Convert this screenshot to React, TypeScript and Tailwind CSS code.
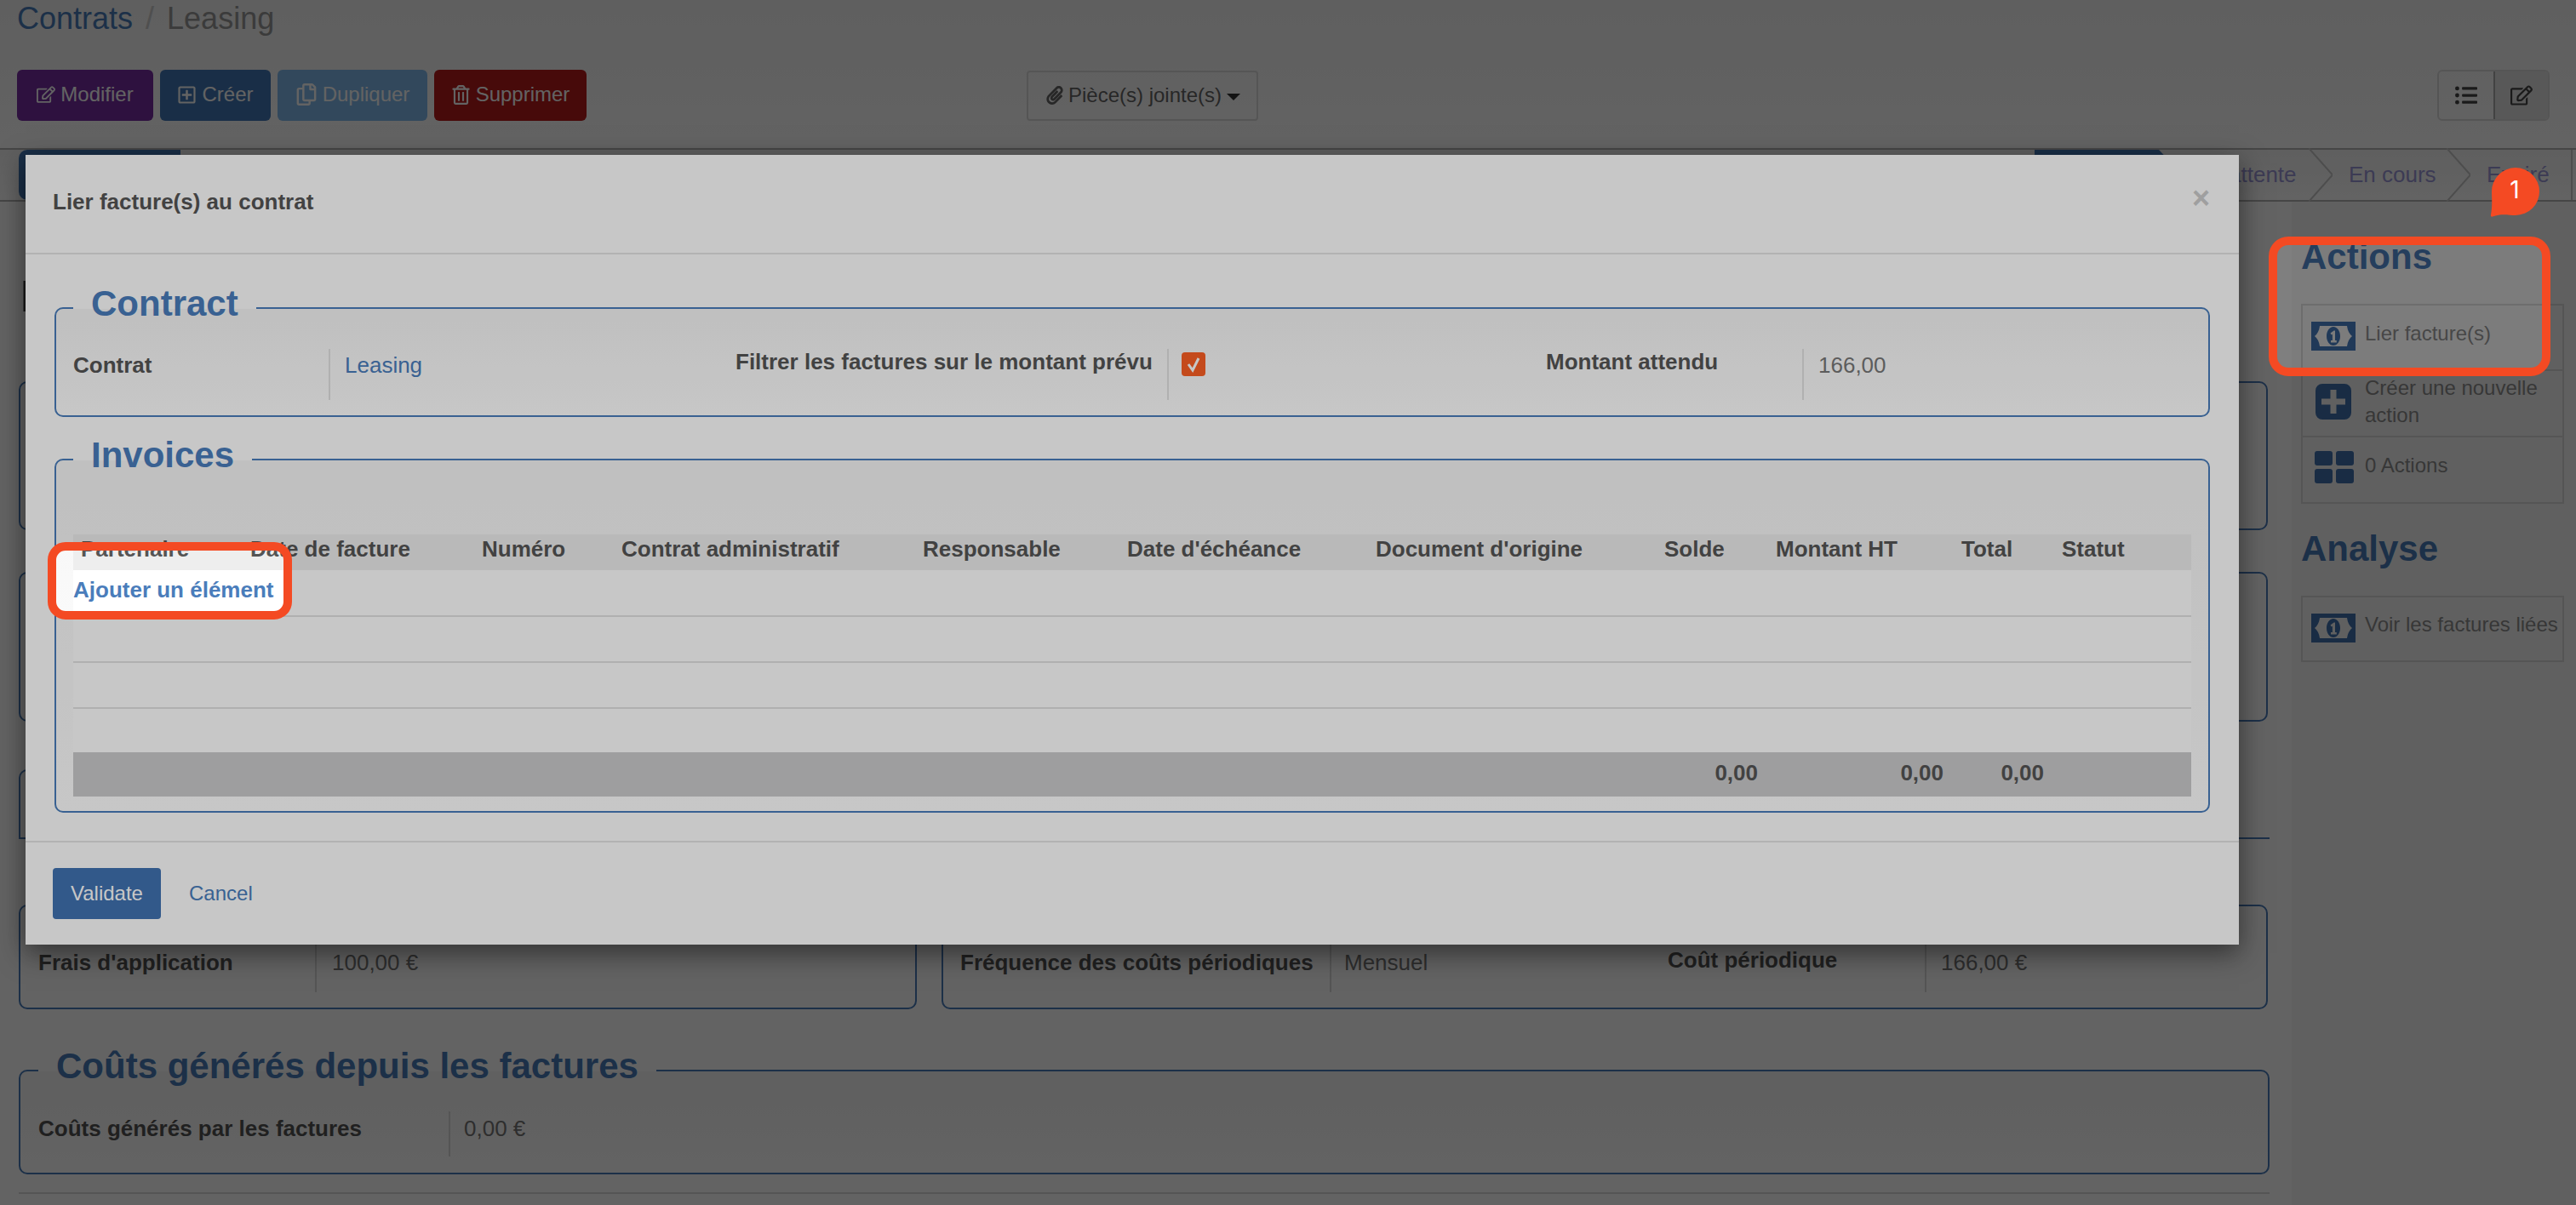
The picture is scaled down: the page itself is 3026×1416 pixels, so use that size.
import type { ReactNode } from "react";
import {
  FaListUl,
  FaPaperclip,
  FaRegCopy,
  FaRegEdit,
  FaRegPlusSquare,
  FaRegTrashAlt,
} from "react-icons/fa";

const COLUMNS = [
  { label: "Partenaire", width: "w-[199px]" },
  { label: "Date de facture", width: "w-[272px]" },
  { label: "Numéro", width: "w-[164px]" },
  { label: "Contrat administratif", width: "w-[354px]" },
  { label: "Responsable", width: "w-[240px]" },
  { label: "Date d'échéance", width: "w-[292px]" },
  { label: "Document d'origine", width: "w-[339px]" },
  { label: "Solde", width: "w-[131px]", total: "0,00" },
  { label: "Montant HT", width: "w-[218px]", total: "0,00" },
  { label: "Total", width: "w-[118px]", total: "0,00" },
  { label: "Statut", width: "w-[161px]" },
];

function roundedRect(x: number, y: number, w: number, h: number, r: number) {
  return `M${x + r} ${y}H${x + w - r}A${r} ${r} 0 0 1 ${x + w} ${y + r}V${y + h - r}A${r} ${r} 0 0 1 ${x + w - r} ${y + h}H${x + r}A${r} ${r} 0 0 1 ${x} ${y + h - r}V${y + r}A${r} ${r} 0 0 1 ${x + r} ${y}Z`;
}

function MoneyIcon() {
  return (
    <svg viewBox="0 0 52 34" className="h-[34px] w-[52px] fill-[#4072b1]">
      <path
        fillRule="evenodd"
        d="M0 0H52V34H0ZM10 5Q9 13 4 17Q9 21 10 29H42Q43 21 48 17Q43 13 42 5Z"
      />
      <path
        fillRule="evenodd"
        d="M26 6C30.6 6 34 11 34 17C34 23 30.6 28 26 28C21.4 28 18 23 18 17C18 11 21.4 6 26 6ZM26.6 10.5L22.5 13.5L23.8 15.5L24.9 14.7V22H23V24.4H29.8V22H28V10.5Z"
      />
    </svg>
  );
}

function PlusIcon() {
  return (
    <svg viewBox="0 0 42 42" className="h-[42px] w-[42px] fill-[#4072b1]">
      <path
        fillRule="evenodd"
        d="M8 0H34A8 8 0 0 1 42 8V34A8 8 0 0 1 34 42H8A8 8 0 0 1 0 34V8A8 8 0 0 1 8 0ZM17.5 7V17.5H7V24.5H17.5V35H24.5V24.5H35V17.5H24.5V7Z"
      />
    </svg>
  );
}

function GridIcon() {
  return (
    <svg viewBox="0 0 46 38" className="h-[38px] w-[46px] fill-[#4072b1]">
      <rect x="0" y="0" width="21" height="17" rx="3" />
      <rect x="25" y="0" width="21" height="17" rx="3" />
      <rect x="0" y="21" width="21" height="17" rx="3" />
      <rect x="25" y="21" width="21" height="17" rx="3" />
    </svg>
  );
}

function Sheet({
  title,
  children,
  className,
}: {
  title: string;
  children: ReactNode;
  className: string;
}) {
  return (
    <fieldset
      className={`rounded-[10px] border-2 border-[#4a7dbb] bg-linear-to-b from-[#f6f6f6] to-white ${className}`}
    >
      <legend className="px-[21px] pb-[10px] text-[42px] leading-[48px] font-bold text-[#4a7dbb]">
        {title}
      </legend>
      {children}
    </fieldset>
  );
}

function ToolButton({
  icon,
  label,
  className,
}: {
  icon: ReactNode;
  label: string;
  className: string;
}) {
  return (
    <button
      className={`flex h-[60px] items-center justify-center gap-[6px] rounded-[6px] pb-[2px] text-[24px] text-white ${className}`}
    >
      {icon}
      {label}
    </button>
  );
}

function StatusChevron() {
  return (
    <svg viewBox="0 0 28 63" className="h-[63px] w-[28px] shrink-0 fill-none stroke-[#c6c6c6] stroke-2">
      <path d="M0 0L28 31.5L0 63" />
    </svg>
  );
}

function ActionBox({ children }: { children: ReactNode }) {
  return <div className="mt-[31px] w-[309px] border-2 border-[#dbdbdb]">{children}</div>;
}

export default function App() {
  return (
    <div className="relative h-[1416px] w-[3026px] overflow-hidden bg-white font-['Liberation_Sans',Arial,sans-serif] text-[26px] text-[#555]">
      {/* page under the dialog */}
      <header className="h-[174px] bg-linear-to-b from-[#f4f4f4] to-white pl-[20px]">
        <div className="pt-[2px] text-[36px] leading-[40px]">
          <span className="text-[#4a7dbb]">Contrats</span>
          <span className="px-[15px] text-[#ccc]">/</span>
          <span className="text-[#999]">Leasing</span>
        </div>
        <div className="mt-[40px] flex items-center pr-[31px]">
          <div className="flex w-[1186px] gap-[8px]">
            <ToolButton icon={<FaRegEdit className="text-[22px]" />} label="Modifier" className="w-[160px] bg-[#762ea2]" />
            <ToolButton icon={<FaRegPlusSquare className="text-[23px]" />} label="Créer" className="w-[130px] bg-[#4378b6]" />
            <ToolButton icon={<FaRegCopy className="text-[26px]" />} label="Dupliquer" className="w-[176px] bg-[#83bbec]" />
            <ToolButton icon={<FaRegTrashAlt className="text-[23px]" />} label="Supprimer" className="w-[179px] bg-[#b61a1a]" />
          </div>
          <button className="flex h-[59px] w-[272px] items-center gap-[5px] rounded-[4px] border-2 border-[#dbdbdb] pl-[20px] text-[24px] text-[#666]">
            <FaPaperclip className="text-[22px]" />
            Pièce(s) jointe(s)
            <span className="mt-[3px] ml-[1px] border-x-[8px] border-t-[8px] border-x-transparent border-t-[#333]" />
          </button>
          <div className="ml-auto flex h-[60px] w-[132px] rounded-[6px] border-2 border-[#dbdbdb]">
            <span className="flex w-[64px] items-center justify-center text-[26px] text-[#444]">
              <FaListUl />
            </span>
            <span className="flex flex-1 items-center justify-center rounded-r-[4px] border-l-2 border-[#aaa] bg-[#e2e2e2] text-[26px] text-[#444]">
              <FaRegEdit />
            </span>
          </div>
        </div>
      </header>

      <div className="flex h-[63px] items-center border-y-2 border-[#b5b5b5] bg-linear-to-b from-[#f4f4f4] to-white text-[#9c98d8]">
        <div className="ml-[22px] h-[59px] w-[190px] rounded-l-[10px] bg-[#4378b6]" />
        <div className="ml-[2178px] h-[59px] w-[174px] bg-[#4378b6] [clip-path:polygon(0_0,146px_0,100%_50%,146px_100%,0_100%)]" />
        <span className="ml-[15px] w-[133px] shrink-0">En attente</span>
        <StatusChevron />
        <span className="ml-[19px] w-[115px] shrink-0">En cours</span>
        <StatusChevron />
        <span className="ml-[19px] h-full w-[101px] shrink-0 border-r-2 border-[#c6c6c6] leading-[59px]">Expiré</span>
      </div>

      <div className="flex h-[1179px]">
        <main className="w-[2692px] shrink-0 pr-[26px] pl-[22px]">
          <h1 className="mt-[85px] pl-[2px] text-[52px] leading-[52px] font-bold text-[#444]">Leasing</h1>
          <div className="mt-[74px] grid grid-cols-[1055px_1558px] gap-x-[29px] gap-y-[49px]">
            <div className="h-[175px] rounded-[10px] border-2 border-[#4a7dbb]" />
            <div className="h-[175px] rounded-[10px] border-2 border-[#4a7dbb]" />
            <div className="h-[176px] rounded-[10px] border-2 border-[#4a7dbb]" />
            <div className="h-[176px] rounded-[10px] border-2 border-[#4a7dbb]" />
          </div>
          <div className="mt-[56px] h-[82px] border-b-2 border-[#4a7dbb]">
            <div className="h-full w-[20px] rounded-tl-[10px] border-t-2 border-l-2 border-[#4a7dbb]" />
          </div>
          <div className="mt-[77px] grid grid-cols-[1055px_1558px] gap-x-[29px]">
            <div className="flex h-[123px] rounded-[10px] border-2 border-[#4a7dbb] pt-[41px] pl-[21px]">
              <div className="h-[60px] w-[325px] pt-[7px] leading-[36px] font-bold">Frais d'application</div>
              <div className="h-[60px] border-l-2 border-[#dbdbdb] pt-[7px] pl-[18px] leading-[36px] text-[#777]">100,00 €</div>
            </div>
            <div className="flex h-[123px] rounded-[10px] border-2 border-[#4a7dbb] pt-[41px] pl-[20px]">
              <div className="h-[60px] w-[434px] pt-[7px] leading-[36px] font-bold">Fréquence des coûts périodiques</div>
              <div className="h-[60px] w-[397px] border-l-2 border-[#dbdbdb] pt-[7px] pl-[15px] leading-[36px] text-[#777]">Mensuel</div>
              <div className="h-[60px] w-[302px] pt-[4px] leading-[36px] font-bold">Coût périodique</div>
              <div className="h-[60px] border-l-2 border-[#dbdbdb] pt-[7px] pl-[17px] leading-[36px] text-[#777]">166,00 €</div>
            </div>
          </div>
          <Sheet title="Coûts générés depuis les factures" className="mt-[43px] pb-[19px] pl-[21px]">
            <div className="mt-[19px] flex h-[53px]">
              <div className="w-[482px] pt-[2px] leading-[36px] font-bold">Coûts générés par les factures</div>
              <div className="border-l-2 border-[#dbdbdb] pt-[2px] pl-[16px] leading-[36px] text-[#777]">0,00 €</div>
            </div>
          </Sheet>
          <hr className="mt-[21px] border-t-2 border-[#dcdcdc]" />
        </main>

        <aside className="flex-1 bg-[#f9f9f9] pt-[41px] pl-[11px] text-[24px] leading-[32px] text-[#8f8f8f]">
          <h2 className="text-[42px] leading-[48px] font-bold text-[#4a7dbb]">Actions</h2>
          <div className="mt-[31px] w-[309px] border-2 border-[#dbdbdb]">
            <div className="flex h-[77px] border-b-2 border-[#dbdbdb] pt-[19px] pl-[10px]">
              <MoneyIcon />
              <span className="-mt-[2px] ml-[11px]">Lier facture(s)</span>
            </div>
            <div className="flex h-[78px] border-b-2 border-[#dbdbdb] pt-[4px] pl-[15px]">
              <span className="pt-[11px]"><PlusIcon /></span>
              <span className="ml-[16px]">Créer une nouvelle action</span>
            </div>
            <div className="flex h-[76px] pt-[16px] pl-[14px]">
              <GridIcon />
              <span className="mt-[1px] ml-[13px]">0 Actions</span>
            </div>
          </div>
          <h2 className="mt-[29px] text-[42px] leading-[48px] font-bold text-[#4a7dbb]">Analyse</h2>
          <ActionBox>
            <div className="flex h-[74px] pt-[19px] pl-[10px]">
              <MoneyIcon />
              <span className="-mt-[3px] ml-[11px] whitespace-nowrap">Voir les factures liées</span>
            </div>
          </ActionBox>
        </aside>
      </div>

      {/* dialog backdrop */}
      <div className="absolute inset-0 bg-black/50" />

      {/* dialog */}
      <div className="absolute top-[182px] left-[30px] w-[2600px] bg-white shadow-[0_10px_30px_rgba(0,0,0,0.5)]">
        <div className="relative h-[117px] border-b-2 border-[#e5e5e5] pt-[37px] pl-[32px] leading-[36px] font-bold">
          Lier facture(s) au contrat
          <span className="absolute top-[31px] right-[34px] text-[36px] leading-[40px] font-bold text-[#ccc]">×</span>
        </div>
        <div className="px-[34px] pt-[34px]">
          <Sheet title="Contract" className="pb-[18px] pl-[20px]">
            <div className="mt-[19px] flex h-[60px]">
              <div className="w-[300px] pt-[1px] leading-[36px] font-bold">Contrat</div>
              <div className="w-[478px] border-l-2 border-[#e2e2e2] pt-[1px] pl-[17px] leading-[36px] text-[#4a7dbb]">Leasing</div>
              <div className="w-[507px] leading-[30px] font-bold">Filtrer les factures sur le montant prévu</div>
              <div className="w-[445px] border-l-2 border-[#e2e2e2] pt-[4px] pl-[15px]">
                <span className="flex h-[28px] w-[28px] items-center justify-center rounded-[4px] bg-[#fb5f24]">
                  <svg viewBox="0 0 24 24" className="h-[24px] w-[24px] fill-none stroke-white stroke-[3]">
                    <path d="M6 12L11 19L18 5" />
                  </svg>
                </span>
              </div>
              <div className="w-[301px] leading-[30px] font-bold">Montant attendu</div>
              <div className="border-l-2 border-[#e2e2e2] pt-[1px] pl-[17px] leading-[36px] text-[#777]">166,00</div>
            </div>
          </Sheet>
          <Sheet title="Invoices" className="mt-[21px] pr-[19px] pb-[17px] pl-[20px]">
            <table className="mt-[59px] w-[2488px] table-fixed leading-[30px]">
              <thead>
                <tr className="h-[42px] bg-[#eeeeee]">
                  {COLUMNS.map((col) => (
                    <th key={col.label} className={`pb-[8px] pl-[9px] text-left font-bold whitespace-nowrap ${col.width}`}>
                      {col.label}
                    </th>
                  ))}
                </tr>
              </thead>
              <tbody className="bg-white">
                <tr className="h-[54px] border-b-2 border-[#e2e2e2]">
                  <td colSpan={11} className="pb-[8px] font-bold text-[#4a7dbb]">
                    Ajouter un élément
                  </td>
                </tr>
                <tr className="h-[54px] border-b-2 border-[#e2e2e2]"><td colSpan={11} /></tr>
                <tr className="h-[54px] border-b-2 border-[#e2e2e2]"><td colSpan={11} /></tr>
                <tr className="h-[52px]"><td colSpan={11} /></tr>
              </tbody>
              <tfoot>
                <tr className="h-[52px] bg-[#cbcbcc]">
                  {COLUMNS.map((col) => (
                    <td key={col.label} className="pr-[12px] pb-[4px] text-right font-bold">
                      {col.total}
                    </td>
                  ))}
                </tr>
              </tfoot>
            </table>
          </Sheet>
        </div>
        <div className="mt-[33px] flex h-[122px] items-start gap-[33px] border-t-2 border-[#e5e5e5] pt-[30px] pl-[32px] text-[24px]">
          <button className="h-[60px] w-[127px] rounded-[4px] bg-[#4072b1] text-white">Validate</button>
          <span className="pt-[12px] text-[#4a7dbb]">Cancel</span>
        </div>
      </div>

      {/* guide overlay with its two spotlights */}
      <svg viewBox="0 0 3026 1416" className="absolute inset-0 h-[1416px] w-[3026px]">
        <path
          fillRule="evenodd"
          fillOpacity="0.22"
          d={`M0 0H3026V1416H0Z${roundedRect(61, 642, 277, 81, 16)}${roundedRect(2670, 283, 321, 154, 18)}`}
        />
        <path
          fill="none"
          stroke="#f44a23"
          strokeWidth="10"
          d={`${roundedRect(61, 642, 277, 81, 16)}${roundedRect(2670, 283, 321, 154, 18)}`}
        />
      </svg>
      <div className="absolute top-[197px] left-[2925px] flex h-[58px] w-[58px] items-center justify-center pb-[6px] font-['Inter',sans-serif] text-[28px] text-white">
        <svg viewBox="0 0 58 58" className="absolute inset-0 h-[58px] w-[58px] fill-[#f44a23]">
          <path d="M30 0A28 28 0 1 1 30 56C22 56 14 53.5 3 57.5C1.5 58 .5 57 1 55C3 46 2 36 2 28A28 28 0 0 1 30 0Z" />
        </svg>
        <span className="relative">1</span>
      </div>
    </div>
  );
}
